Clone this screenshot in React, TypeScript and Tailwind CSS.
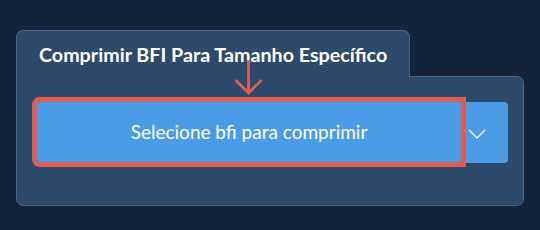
import React from 'react';

// Compress tool card: tab header + split button with annotation arrow
export default function App() {
  return (
    <div className="w-[540px] h-[230px] bg-[#12233a] pt-[30px] pl-4 font-['Lato',sans-serif] relative">
      {/* Tab */}
      <div className="relative z-10 w-[394px] h-[47px] bg-[#2d4a6a] border border-b-0 border-[#4c6585] rounded-t-[7px] pl-[22px] pt-[12px]">
        <h1 className="text-[19.7px] font-bold text-white leading-6">
          Comprimir BFI Para Tamanho Específico
        </h1>
      </div>

      {/* Body */}
      <div className="-mt-px w-[508px] h-[130px] bg-[#2d4a6a] border border-[#4c6585] rounded-b-[7px] rounded-tr-[7px] pl-5 pt-[25px]">
        <div className="flex">
          <button className="relative z-10 w-[424px] h-[60px] bg-[#4b9be7] rounded-l-[3px] outline-[5px] outline-solid outline-[#dc5e5a] text-white text-[19px] font-normal">
            Selecione bfi para comprimir
          </button>
          <button className="w-[47px] h-[61px] bg-[#4b9be7] rounded-r-[4px] flex items-center justify-start pl-[7px] pt-[2px]">
            <svg width="18" height="10" viewBox="0 0 18 10" fill="none">
              <path d="M1 1l8 8 8-8" stroke="white" strokeWidth="1.3" />
            </svg>
          </button>
        </div>
      </div>

      {/* Annotation arrow */}
      <svg className="absolute left-[234px] top-[58px] z-20" width="29" height="38" viewBox="0 0 29 38" fill="none">
        <path d="M14.5 2v33M1.5 22l13 13 13-13" stroke="#dc5e5a" strokeWidth="2.8" />
      </svg>
    </div>
  );
}
